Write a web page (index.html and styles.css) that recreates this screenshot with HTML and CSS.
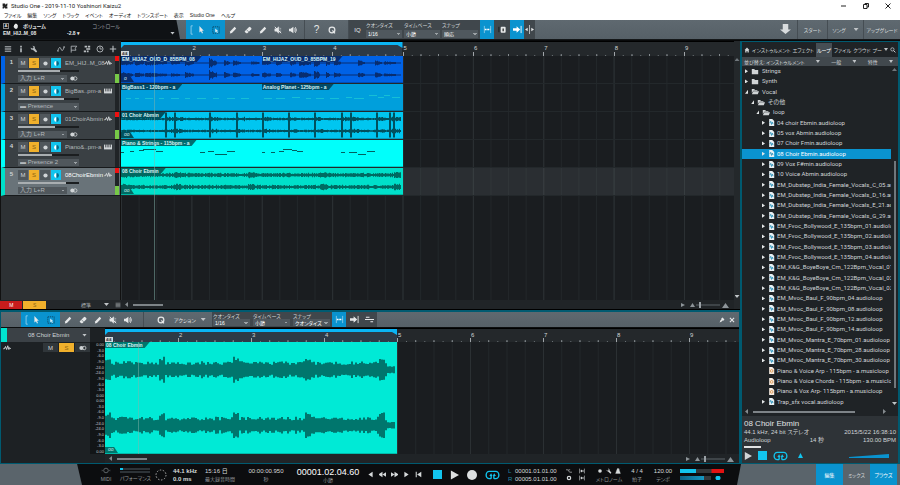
FILE: index.html
```html
<!DOCTYPE html>
<html lang="ja">
<head>
<meta charset="utf-8">
<title>Studio One - 2019-11-10 Yoshinori Kaizu2</title>
<link rel="stylesheet" href="styles.css">
</head>
<body>
<svg class="defs" aria-hidden="true">
  <symbol id="i-menu" viewBox="0 0 10 10"><path d="M1 2h8M1 4h8M1 6h8M1 8h8" stroke="currentColor"/></symbol>
  <symbol id="i-info" viewBox="0 0 10 10"><path d="M4 1h2v2H4zM4 4h2v5H4z" fill="currentColor"/></symbol>
  <symbol id="i-wrench" viewBox="0 0 10 10"><path d="M3 1l1.500 1.500-.5 1.500L2.500 4.500 1 3q-.5 3 2.500 3l4 3.500 1.500-1.500L6 4Q6.500 1 3 1z" fill="currentColor"/></symbol>
  <symbol id="i-curve" viewBox="0 0 12 10"><path d="M1 8q3-9 5-3t5-3.500" fill="none" stroke="currentColor" stroke-width="1.200"/><circle cx="1.500" cy="8" r="1" fill="currentColor"/><circle cx="10.500" cy="2" r="1" fill="currentColor"/></symbol>
  <symbol id="i-flag" viewBox="0 0 10 10"><path d="M1.500 9.500V1.500h7L6.500 4l1 2.500h-6" fill="none" stroke="currentColor"/></symbol>
  <symbol id="i-steps" viewBox="0 0 10 10"><path d="M2 1h3v2H2zM6 1h3v2H6zM4 4h3v2H4zM1 7h3v2H1zM7 4h2v2H7zM5 7h2v2H5z" fill="currentColor"/></symbol>
  <symbol id="i-clock" viewBox="0 0 10 10"><circle cx="5" cy="5" r="3.800" fill="none" stroke="currentColor" stroke-width="1.100"/><path d="M5 2v3h2.500" fill="none" stroke="currentColor"/></symbol>
  <symbol id="i-midi" viewBox="0 0 12 10"><circle cx="6" cy="5" r="3.300" fill="none" stroke="#5d6468" stroke-width="1.400"/><path d="M0 3.500v3l1.500-1.500zM12 3.500v3L10.500 5z" fill="#5d6468"/></symbol>
  <symbol id="i-plus" viewBox="0 0 10 10"><path d="M5 1v8M1 5h8" stroke="currentColor" stroke-width="1.400"/></symbol>
  <symbol id="i-arrow" viewBox="0 0 10 10"><path d="M3 0v8l2-1.500L6.200 9.500l1.300-.6L6.200 6H8.500z" fill="currentColor"/></symbol>
  <symbol id="i-marquee" viewBox="0 0 10 10"><rect x="1" y="1" width="8" height="8" fill="none" stroke="currentColor" stroke-dasharray="1.500 1"/><path d="M4 3v5l1.300-1 1 2 1-.5-1-2H8z" fill="#cfe9f6"/></symbol>
  <symbol id="i-pen" viewBox="0 0 10 10"><path d="M1 9.500l.7-3L7 1l2 2-5.300 5.700z" fill="currentColor"/></symbol>
  <symbol id="i-eraser" viewBox="0 0 10 10"><path d="M1 6.500L6 1.500q1-1 2 0l1 1q.8.8 0 1.800L4.500 8.800q-1 .8-2 0L1 7.500z" fill="currentColor"/><path d="M3 4.500l3 3" stroke="#5a646b" stroke-width=".8"/></symbol>
  <symbol id="i-mute" viewBox="0 0 10 10"><path d="M1 3.500h2L6 1v8L3 6.500H1zM7 3h2M7 5h2M7 7h2" fill="currentColor" stroke="currentColor" stroke-width=".6"/><path d="M1 1l8 8" stroke="currentColor" stroke-width="1.200"/></symbol>
  <symbol id="i-speaker" viewBox="0 0 10 10"><path d="M0 3.300h2L5.500.8v8.400L2 6.700H0z" fill="currentColor"/><path d="M7 3q1.500 2 0 4M8 1.500q2.500 3.500 0 7" fill="none" stroke="currentColor" stroke-width="1.100"/></symbol>
  <symbol id="i-q" viewBox="0 0 10 10"><circle cx="5" cy="5" r="3.600" fill="none" stroke="currentColor" stroke-width="1.500"/><path d="M5.500 5.500l3.200 3.800" stroke="currentColor" stroke-width="1.500"/></symbol>
  <symbol id="i-snap" viewBox="0 0 10 10"><path d="M1.500 1v8M8.500 1v8" stroke="#a9d8f0" stroke-width=".8"/><path d="M2 5h6" stroke="currentColor" stroke-width="1.500" stroke-dasharray="2 .7"/></symbol>
  <symbol id="i-lock" viewBox="0 0 10 10"><path d="M1 2v6" stroke="#15191b"/><rect x="3" y="2" width="5.500" height="6.500" rx="1" fill="currentColor"/><path d="M5 4h1.500v3H5z" fill="#333"/></symbol>
  <symbol id="i-follow" viewBox="0 0 10 10"><path d="M0 3.500h4V1.500L8 5 4 8.500V6.500H0z" fill="currentColor"/><path d="M9 1v8" stroke="currentColor"/></symbol>
  <symbol id="i-center" viewBox="0 0 10 10"><path d="M5 0v10" stroke="currentColor" stroke-width=".8"/><path d="M0 5l3-2v4zM10 5L7 3v4z" fill="currentColor"/></symbol>
  <symbol id="i-zero" viewBox="0 0 10 10"><path d="M0 5h10M1 2.500h4M6 7.500h3" stroke="currentColor" stroke-width="1.300"/></symbol>
  <symbol id="i-down" viewBox="0 0 12 12"><path d="M3 0h6v6h3l-6 5-6-5h3z" fill="currentColor"/></symbol>
  <symbol id="i-wave" viewBox="0 0 10 8"><path d="M0 5h1.500L3 2l1.500 4L6 1l1.500 5L8.500 3.500 10 5" fill="none" stroke="currentColor" stroke-width="1.300"/></symbol>
  <symbol id="i-keys" viewBox="0 0 10 7"><rect width="10" height="6" y=".5" fill="currentColor"/><path d="M2 0v4M4 0v4M6 0v4M8 0v4" stroke="#33383c" stroke-width=".9"/></symbol>
  <symbol id="i-stereo" viewBox="0 0 10 6"><circle cx="3" cy="3" r="2.600" fill="currentColor"/><circle cx="6.500" cy="3" r="2.200" fill="none" stroke="currentColor"/></symbol>
  <symbol id="i-rec" viewBox="0 0 10 10"><circle cx="5" cy="5" r="3" fill="currentColor"/></symbol>
  <symbol id="i-mon" viewBox="0 0 10 10"><path d="M5 1.500a3.500 3.500 0 000 7z" fill="#fff"/><path d="M5 1.500a3.500 3.500 0 010 7z" fill="#066a88"/></symbol>
  <symbol id="i-folder" viewBox="0 0 10 8"><path d="M1 1h3l1 1h4v5.500H1z" fill="currentColor"/></symbol>
  <symbol id="i-open" viewBox="0 0 10 8"><path d="M1 6V1h3l1 1h3v1.200H3zM3 3.800h7L8.500 7.500H1z" fill="currentColor"/></symbol>
  <symbol id="i-audio" viewBox="0 0 8 9"><path d="M1 0h4l2.500 2.500V9H1z" fill="#e8f0f3"/><path d="M2 5l1-2 1 4 1-3 1 2.500" fill="none" stroke="#1c8cb8"/></symbol>
  <symbol id="i-music" viewBox="0 0 8 9"><path d="M1 0h4l2.500 2.500V9H1z" fill="#f5ece2"/><circle cx="4.200" cy="5" r="1.700" fill="none" stroke="#d98a3d"/></symbol>
  <symbol id="i-home" viewBox="0 0 10 10"><path d="M5 1L1 5h1v4h2.200V6.500h1.600V9H8V5h1z" fill="currentColor"/></symbol>
  <symbol id="i-search" viewBox="0 0 10 10"><circle cx="4" cy="4" r="2.700" fill="none" stroke="currentColor" stroke-width="1.200"/><path d="M6 6l3 3" stroke="currentColor" stroke-width="1.600"/></symbol>
  <symbol id="i-loop" viewBox="0 0 16 11"><path d="M6.500 9.500H4.500a3.500 4 0 010-8h7a3.500 4 0 010 8H9.500M6.500 9.500V6.500M9.500 9.500V6.500" fill="none" stroke="currentColor" stroke-width="1.500"/><path d="M4.500 6.500L6.500 3.500 8 6.500zM8.300 6.500L9.800 3.500l2 3z" fill="currentColor"/></symbol>
  <symbol id="i-play" viewBox="0 0 10 10"><path d="M1 0l9 5-9 5z" fill="currentColor"/></symbol>
  <symbol id="i-back" viewBox="0 0 10 10"><path d="M8 1v8L2 5z" fill="currentColor"/></symbol>
  <symbol id="i-rew" viewBox="0 0 10 10"><path d="M5 1v8L-1 5zM11 1v8L5 5z" fill="currentColor"/></symbol>
  <symbol id="i-ff" viewBox="0 0 10 10"><path d="M-1 1v8l6-4zM5 1v8l6-4z" fill="currentColor"/></symbol>
  <symbol id="i-fwd" viewBox="0 0 10 10"><path d="M2 1v8l6-4z" fill="currentColor"/></symbol>
  <symbol id="i-start" viewBox="0 0 10 10"><path d="M9 1v8L3 5zM1 1h1.500v8H1z" fill="currentColor"/></symbol>
  <symbol id="i-metro" viewBox="0 0 10 10"><path d="M4 1h2l3 8H1zM5 5l3-4" fill="currentColor" stroke="currentColor" stroke-width=".6"/></symbol>
  <symbol id="i-gear" viewBox="0 0 10 10"><circle cx="5" cy="5" r="2.800" fill="none" stroke="currentColor" stroke-width="2"/></symbol>
  <symbol id="i-pre" viewBox="0 0 10 10"><path d="M0 3h3l3 4h4M4 3h3" fill="none" stroke="currentColor"/></symbol>
  <symbol id="i-punch" viewBox="0 0 10 10"><path d="M1 1v8M9 1v8" stroke="currentColor"/><path d="M2 5l3-2.500v1.500h3v2H5v1.500z" fill="currentColor"/></symbol>
  <symbol id="i-hand" viewBox="0 0 10 10"><path d="M2 3h1V1.500h1.200V1h1.300v.5h1.300V3H8v4L6.500 9.500H3.500L1 6.500z" fill="currentColor"/></symbol>
  <symbol id="i-logo" viewBox="0 0 10 10"><path d="M1 1h4l1 2 2-2h1v3L7 6h2v3H5L4 7 3 9H1V6l2-1H1z" fill="#222"/></symbol>
  <symbol id="i-x" viewBox="0 0 10 10"><path d="M1.500 1.500l7 7M8.500 1.500l-7 7" stroke="currentColor" stroke-width="1.800"/></symbol>
  <symbol id="i-pin" viewBox="0 0 10 10"><path d="M4 2l2-1 3 3-1 2-2 0-1.500 1.500L1 9l1.500-3.500L4 4z" fill="currentColor"/></symbol>
  <symbol id="i-zoomer" viewBox="0 0 50 8"><path d="M2 2l4 2-4 2zM11 6l2.500-4L16 6zM50 7l-3.500-5L43 7z" fill="#8d9499"/><path d="M17 4h24" stroke="#5c656b"/><path d="M21 1v6" stroke="#9aa1a6" stroke-width="2"/></symbol>
</svg>

<header class="titlebar">
  <div class="titlebar-text">
    <svg class="ic6"><use href="#i-logo"/></svg>
    <span>Studio One - 2019-11-10 Yoshinori Kaizu2</span>
    <span class="window-buttons">
      <button aria-label="最小化"><svg viewBox="0 0 6 6"><path d="M0 3h5" stroke="#222"/></svg></button>
      <button aria-label="元に戻す"><svg viewBox="0 0 6 6"><path d="M.5 1.500h3.500v4H.500zM2 1.500V.5h3.500v3.500H4" fill="none" stroke="#222"/></svg></button>
      <button aria-label="閉じる"><svg viewBox="0 0 6 6"><path d="M.5.5l5 5M5.500.5l-5 5" stroke="#222"/></svg></button>
    </span>
  </div>
  <nav class="menubar">
    <a href="#">ファイル</a><a href="#">編集</a><a href="#">ソング</a><a href="#">トラック</a><a href="#">イベント</a><a href="#">オーディオ</a><a href="#">トランスポート</a><a href="#">表示</a><a href="#">Studio One</a><a href="#">ヘルプ</a>
  </nav>
</header>

<div class="toolbar main-toolbar">
  <div class="param-panel">
    <div class="param-line"><b class="auto-box">A</b><svg class="ic6"><use href="#i-hand"/></svg><b>ボリューム</b><span class="param-control">コントロール</span></div>
    <div class="param-line"><b class="param-track">EM_HIJ..M_08</b><b>-2.8 ▾</b><i class="tri param-open"></i></div>
  </div>
  <div class="tool-active">
    <svg class="bracket" viewBox="0 0 3 12"><path d="M3 1H1v10h2" fill="none" stroke="#9bd4ef"/></svg>
    <button class="tool" aria-label="矢印"><svg><use href="#i-arrow"/></svg></button>
    <button class="tool dark" aria-label="範囲"><svg><use href="#i-marquee"/></svg></button>
  </div>
  <button class="tool" aria-label="ペイント"><svg><use href="#i-pen"/></svg></button>
  <button class="tool" aria-label="消しゴム"><svg><use href="#i-eraser"/></svg></button>
  <button class="tool" aria-label="分割"><svg><use href="#i-pen"/></svg></button>
  <button class="tool" aria-label="ミュート"><svg><use href="#i-mute"/></svg></button>
  <button class="tool" aria-label="試聴"><svg><use href="#i-speaker"/></svg></button>
  <div class="tool-pair">
    <button class="tool glyph">?</button>
    <button class="tool" aria-label="クオンタイズ"><svg><use href="#i-q"/></svg></button>
  </div>
  <div class="snap-group">
    <button class="iq">IQ</button>
    <label class="combo">クオンタイズ<select><option>1/16</option></select></label>
    <label class="combo">タイムベース<select><option>小節</option></select></label>
    <label class="combo">スナップ<select><option>順応</option></select></label>
    <button class="toggle on" aria-label="スナップ"><svg><use href="#i-snap"/></svg></button>
    <button class="toggle" aria-label="ロック"><svg><use href="#i-lock"/></svg></button>
    <button class="toggle on" aria-label="オートスクロール"><svg><use href="#i-follow"/></svg></button>
    <button class="toggle slim" aria-label="中央"><svg><use href="#i-center"/></svg></button>
  </div>
  <div class="page-buttons">
    <button class="dl" aria-label="ダウンロード"><svg><use href="#i-down"/></svg></button>
    <button class="start">スタート</button>
    <button class="song">ソング<i class="tri"></i></button>
    <button class="upgrade">アップグレード</button>
  </div>
</div>

<main class="workspace">
  <div class="center">
    <section class="arranger">
      <div class="track-tools">
        <svg><use href="#i-menu"/></svg><svg><use href="#i-info"/></svg><svg><use href="#i-wrench"/></svg><i class="grow"></i><svg><use href="#i-curve"/></svg><svg><use href="#i-flag"/></svg><svg><use href="#i-steps"/></svg><svg><use href="#i-clock"/></svg><svg><use href="#i-plus"/></svg>
      </div>
      <div class="ruler">
        <i class="loop-range"></i><b class="sig">4/4</b>
        <span></span><span>2</span><span>3</span><span>4</span><span>5</span><span>6</span><span>7</span><span>8</span><span>9</span>
      </div>
      <div class="track-list">
        <div class="track c1">
          <b class="no">1</b>
          <div class="track-main">
            <div class="track-row"><button>M</button><button class="s">S</button><button aria-label="録音"><svg><use href="#i-rec"/></svg></button><button class="mon" aria-label="モニター"><svg><use href="#i-mon"/></svg></button><span class="tname">EM_HIJ..M_08</span><svg class="kind"><use href="#i-wave"/></svg></div>
            <input class="vol" type="range" aria-label="音量" value="69" style="--v:69%">
            <div class="track-row"><select class="in" aria-label="入力"><option>入力 L+R</option></select><svg class="st"><use href="#i-stereo"/></svg></div>
          </div>
          <div class="meter live"></div>
        </div>
        <div class="track c2">
          <b class="no">2</b>
          <div class="track-main">
            <div class="track-row"><button>M</button><button class="s">S</button><button aria-label="録音"><svg><use href="#i-rec"/></svg></button><button class="mon" aria-label="モニター"><svg><use href="#i-mon"/></svg></button><span class="tname">BigBas..pm-a</span><svg class="kind"><use href="#i-keys"/></svg></div>
            <input class="vol" type="range" aria-label="音量" value="75" style="--v:75%">
            <div class="track-row"><select class="in wide" aria-label="音源"><option>▬ Presence</option></select></div>
          </div>
          <div class="meter"></div>
        </div>
        <div class="track c3">
          <b class="no">3</b>
          <div class="track-main">
            <div class="track-row"><button>M</button><button class="s">S</button><button aria-label="録音"><svg><use href="#i-rec"/></svg></button><button class="mon" aria-label="モニター"><svg><use href="#i-mon"/></svg></button><span class="tname">01ChoirAbmin</span><svg class="kind"><use href="#i-wave"/></svg></div>
            <input class="vol" type="range" aria-label="音量" value="61" style="--v:61%">
            <div class="track-row"><select class="in" aria-label="入力"><option>入力 L+R</option></select><svg class="st"><use href="#i-stereo"/></svg></div>
          </div>
          <div class="meter live"></div>
        </div>
        <div class="track c4">
          <b class="no">4</b>
          <div class="track-main">
            <div class="track-row"><button>M</button><button class="s">S</button><button aria-label="録音"><svg><use href="#i-rec"/></svg></button><button class="mon" aria-label="モニター"><svg><use href="#i-mon"/></svg></button><span class="tname">Piano&amp;..pm-a</span><svg class="kind"><use href="#i-keys"/></svg></div>
            <input class="vol" type="range" aria-label="音量" value="55" style="--v:55%">
            <div class="track-row"><select class="in wide" aria-label="音源"><option>▬ Presence 2</option></select></div>
          </div>
          <div class="meter"></div>
        </div>
        <div class="track c5 selected">
          <b class="no">5</b>
          <div class="track-main">
            <div class="track-row"><button>M</button><button class="s">S</button><button aria-label="録音"><svg><use href="#i-rec"/></svg></button><button class="mon" aria-label="モニター"><svg><use href="#i-mon"/></svg></button><span class="tname">08ChoirEbmin</span><svg class="kind"><use href="#i-wave"/></svg></div>
            <input class="vol" type="range" aria-label="音量" value="79" style="--v:79%">
            <div class="track-row"><select class="in" aria-label="入力"><option>入力 L+R</option></select><svg class="st"><use href="#i-stereo"/></svg></div>
          </div>
          <div class="meter live"></div>
        </div>
      </div>
      <div class="lanes">
        <div class="lane"><div class="clip c1"><svg data-wave="oudA"></svg><b>EM_HIJAZ_OUD_D_85BPM_08</b><i class="fade">o</i></div><div class="clip c1"><svg data-wave="oudB"></svg><b>EM_HIJAZ_OUD_D_85BPM_19</b></div></div>
        <div class="lane"><div class="clip c2"><svg data-notes="bass"></svg><b>BigBass1 - 120bpm - a</b></div><div class="clip c2"><svg data-notes="planet"></svg><b>Analog Planet - 125bpm - a</b></div></div>
        <div class="lane"><div class="clip c3 full"><svg data-wave="spikes"></svg><b>01 Choir Abmin</b><i class="fade">oo</i></div></div>
        <div class="lane"><div class="clip c4 full"><svg data-notes="piano"></svg><b>Piano &amp; Strings - 115bpm - a</b></div></div>
        <div class="lane selected"><div class="clip c5 full"><svg data-wave="choir"></svg><b>08 Choir Ebmin</b><i class="fade">oo</i></div></div>
        <i class="playhead"></i>
      </div>
      <div class="list-foot"><button class="foot-m">M</button><button class="foot-s">S</button><span>標準</span><i class="tri"></i><svg class="ic6"><use href="#i-menu"/></svg></div>
      <div class="hscroll"><i class="tri left"></i><i class="thumb"></i><svg class="zoomer"><use href="#i-zoomer"/></svg></div>
      <div class="vscroll"><i class="tri up"></i><i class="tri"></i></div>
    </section>

    <section class="editor">
      <div class="toolbar editor-toolbar">
        <div class="tool-active">
          <svg class="bracket" viewBox="0 0 3 12"><path d="M3 1H1v10h2" fill="none" stroke="#9bd4ef"/></svg>
          <button class="tool" aria-label="矢印"><svg><use href="#i-arrow"/></svg></button>
          <button class="tool dark" aria-label="範囲"><svg><use href="#i-marquee"/></svg></button>
        </div>
        <button class="tool" aria-label="ペイント"><svg><use href="#i-pen"/></svg></button>
        <button class="tool" aria-label="消しゴム"><svg><use href="#i-eraser"/></svg></button>
        <button class="tool" aria-label="分割"><svg><use href="#i-pen"/></svg></button>
        <button class="tool" aria-label="ミュート"><svg><use href="#i-mute"/></svg></button>
        <button class="tool" aria-label="試聴"><svg><use href="#i-speaker"/></svg></button>
        <div class="action-group">
          <button class="tool" aria-label="クオンタイズ"><svg><use href="#i-q"/></svg></button>
          <button class="action">アクション<i class="tri"></i></button>
        </div>
        <div class="snap-group">
          <label class="combo">クオンタイズ<select><option>1/16</option></select></label>
          <label class="combo">タイムベース<select><option>小節</option></select></label>
          <label class="combo">スナップ<select><option>クオンタイズ</option></select></label>
          <button class="toggle on" aria-label="スナップ"><svg><use href="#i-snap"/></svg></button>
          <button class="toggle" aria-label="オートスクロール"><svg><use href="#i-follow"/></svg></button>
          <button class="toggle" aria-label="ゼロクロス"><svg><use href="#i-zero"/></svg></button>
        </div>
        <div class="panel-close"><button aria-label="固定"><svg><use href="#i-pin"/></svg></button><button aria-label="閉じる"><svg><use href="#i-x"/></svg></button></div>
      </div>
      <div class="editor-body">
        <div class="editor-side">
          <button class="editor-name">08 Choir Ebmin<i class="tri"></i></button>
          <div class="editor-buttons"><svg><use href="#i-wave"/></svg><i class="grow"></i><button>M</button><button class="s">S</button><button aria-label="ステレオ"><svg><use href="#i-stereo"/></svg></button></div>
        </div>
        <div class="db-scale">
          <div><span>0.00</span><span>-3.0</span><span>-6.0</span><span>-9.0</span><span>-24.0</span><span>-24.0</span><span>-9.0</span><span>-6.0</span><span>-3.0</span><span>0.00</span></div>
          <div><span>0.00</span><span>-3.0</span><span>-6.0</span><span>-9.0</span><span>-24.0</span><span>-24.0</span><span>-9.0</span><span>-6.0</span><span>-3.0</span><span>0.00</span></div>
        </div>
        <div class="editor-time">
          <div class="ruler">
            <i class="loop-range"></i><b class="sig">4/4</b>
            <span></span><span>2</span><span>3</span><span>4</span><span>5</span><span>6</span><span>7</span><span>8</span><span>9</span>
          </div>
          <div class="editor-lane"><div class="clip big"><svg data-wave="detail"></svg><b>08 Choir Ebmin</b><i class="fade">oo</i></div><i class="playhead"></i></div>
          <div class="hscroll"><i class="tri left"></i><i class="thumb"></i><svg class="zoomer"><use href="#i-zoomer"/></svg></div>
        </div>
      </div>
    </section>
  </div>

  <aside class="browser">
    <nav class="tabs">
      <a href="#" aria-label="ホーム"><svg><use href="#i-home"/></svg></a><a href="#">インストゥルメント</a><a href="#">エフェクト</a><a href="#" class="on">ループ</a><a href="#">ファイル</a><a href="#">クラウド</a><a href="#">プー</a><i class="tri"></i><a href="#" aria-label="検索"><svg><use href="#i-search"/></svg></a>
    </nav>
    <div class="sort"><span>並び替え: インストゥルメント</span><i class="tri"></i><span>一般</span><i class="tri"></i><span>特性</span><i class="tri"></i></div>
    <div class="tree-wrap">
      <ul class="tree">
        <li class="lv0 closed"><svg><use href="#i-folder"/></svg>Strings</li>
        <li class="lv0 closed"><svg><use href="#i-folder"/></svg>Synth</li>
        <li class="lv0 opened"><svg><use href="#i-open"/></svg>Vocal</li>
        <li class="lv1 opened"><svg><use href="#i-open"/></svg>その他</li>
        <li class="lv2 opened"><svg><use href="#i-open"/></svg>loop</li>
        <li class="lv3 closed"><svg><use href="#i-audio"/></svg>04 choir Ebmin.audioloop</li>
        <li class="lv3 closed"><svg><use href="#i-audio"/></svg>05 vox Abmin.audioloop</li>
        <li class="lv3 closed"><svg><use href="#i-audio"/></svg>07 Choir Fmin.audioloop</li>
        <li class="lv3 closed current"><svg><use href="#i-audio"/></svg>08 Choir Ebmin.audioloop</li>
        <li class="lv3 closed"><svg><use href="#i-audio"/></svg>09 Vox F#min.audioloop</li>
        <li class="lv3 closed"><svg><use href="#i-audio"/></svg>10 Voice Abmin.audioloop</li>
        <li class="lv3 closed"><svg><use href="#i-audio"/></svg>EM_Dubstep_India_Female_Vocals_C_05.au</li>
        <li class="lv3 closed"><svg><use href="#i-audio"/></svg>EM_Dubstep_India_Female_Vocals_D_16.au</li>
        <li class="lv3 closed"><svg><use href="#i-audio"/></svg>EM_Dubstep_India_Female_Vocals_E_21.au</li>
        <li class="lv3 closed"><svg><use href="#i-audio"/></svg>EM_Dubstep_India_Female_Vocals_G_29.au</li>
        <li class="lv3 closed"><svg><use href="#i-audio"/></svg>EM_Fvoc_Bollywood_E_135bpm_01.audiolo</li>
        <li class="lv3 closed"><svg><use href="#i-audio"/></svg>EM_Fvoc_Bollywood_E_135bpm_02.audiolo</li>
        <li class="lv3 closed"><svg><use href="#i-audio"/></svg>EM_Fvoc_Bollywood_E_135bpm_03.audiolo</li>
        <li class="lv3 closed"><svg><use href="#i-audio"/></svg>EM_Fvoc_Bollywood_E_135bpm_04.audiolo</li>
        <li class="lv3 closed"><svg><use href="#i-audio"/></svg>EM_K&amp;G_BoyeBoye_Cm_122Bpm_Vocal_01</li>
        <li class="lv3 closed"><svg><use href="#i-audio"/></svg>EM_K&amp;G_BoyeBoye_Cm_122Bpm_Vocal_02</li>
        <li class="lv3 closed"><svg><use href="#i-audio"/></svg>EM_K&amp;G_BoyeBoye_Cm_122Bpm_Vocal_03</li>
        <li class="lv3 closed"><svg><use href="#i-audio"/></svg>EM_Mvoc_Baul_F_90bpm_04.audioloop</li>
        <li class="lv3 closed"><svg><use href="#i-audio"/></svg>EM_Mvoc_Baul_F_90bpm_08.audioloop</li>
        <li class="lv3 closed"><svg><use href="#i-audio"/></svg>EM_Mvoc_Baul_F_90bpm_12.audioloop</li>
        <li class="lv3 closed"><svg><use href="#i-audio"/></svg>EM_Mvoc_Baul_F_90bpm_14.audioloop</li>
        <li class="lv3 closed"><svg><use href="#i-audio"/></svg>EM_Mvoc_Mantra_E_70bpm_01.audioloop</li>
        <li class="lv3 closed"><svg><use href="#i-audio"/></svg>EM_Mvoc_Mantra_E_70bpm_28.audioloop</li>
        <li class="lv3 closed"><svg><use href="#i-audio"/></svg>EM_Mvoc_Mantra_E_70bpm_30.audioloop</li>
        <li class="lv3"><svg><use href="#i-music"/></svg>Piano &amp; Voice Arp - 115bpm - a.musicloop</li>
        <li class="lv3"><svg><use href="#i-music"/></svg>Piano &amp; Voice Chords - 115bpm - a.musiclo</li>
        <li class="lv3"><svg><use href="#i-music"/></svg>Piano &amp; Vox Arp- 115bpm - a.musicloop</li>
        <li class="lv3 closed"><svg><use href="#i-audio"/></svg>Trap_sfx vocal.audioloop</li>
      </ul>
      <div class="tree-scroll"><i class="tri up"></i><i class="tree-thumb"></i><i class="tri"></i></div>
    </div>
    <div class="tree-hscroll"><i class="tri left"></i><i class="thumb"></i><i class="tri right"></i></div>
    <div class="file-info">
      <h2>08 Choir Ebmin</h2>
      <div class="info-line"><span>44.1 kHz, 24 bit ステレオ</span><span>2015/5/22 16:38:10</span></div>
      <div class="info-line"><span>Audioloop</span><span>14 秒</span><span>130.00 BPM</span></div>
      <i class="progress"></i>
      <div class="preview"><button aria-label="再生"><svg><use href="#i-play"/></svg></button><button class="stop" aria-label="停止"></button><button class="cy" aria-label="ループ"><svg class="wide-ic"><use href="#i-loop"/></svg></button><i class="tri up cyan"></i><svg class="ramp" viewBox="0 0 40 4"><path d="M0 4V3L40 0v4z" fill="#0a93cf"/></svg></div>
    </div>
  </aside>
</main>

<footer class="transport">
  <i class="slant-left"></i>
  <div class="cell midi"><svg class="midi-ic"><use href="#i-midi"/></svg><small>MIDI</small></div>
  <div class="cell perf"><i class="bars"></i><small>パフォーマンス</small></div>
  <div class="cell ring"><svg viewBox="0 0 12 12"><circle cx="6" cy="6" r="5" fill="none" stroke="#aaa" stroke-dasharray="1.500 1.600"/></svg></div>
  <div class="cell rate"><b>44.1 kHz</b><b>0.0 ms</b></div>
  <div class="cell rem"><span>15:16 日</span><small>最大録音時間</small></div>
  <div class="cell mid sec"><span>00:00:00.950</span><small>秒</small></div>
  <div class="cell mid pos"><strong>00001.02.04.60</strong><small>小節</small></div>
  <div class="move"><button aria-label="戻る"><svg><use href="#i-back"/></svg></button><button aria-label="巻戻し"><svg><use href="#i-rew"/></svg></button><button aria-label="早送り"><svg><use href="#i-ff"/></svg></button><button aria-label="進む"><svg><use href="#i-fwd"/></svg></button><button aria-label="先頭"><svg><use href="#i-start"/></svg></button></div>
  <div class="play"><button class="stop" aria-label="停止"></button><button aria-label="再生"><svg><use href="#i-play"/></svg></button><button class="record" aria-label="録音"></button><button class="cy" aria-label="ループ"><svg class="wide-ic"><use href="#i-loop"/></svg></button></div>
  <div class="cell loc"><span><em>L</em>00001.01.01.00</span><span><em>R</em>00005.01.01.00</span></div>
  <div class="opts"><svg><use href="#i-pre"/></svg><svg><use href="#i-punch"/></svg><svg><use href="#i-gear"/></svg><svg><use href="#i-punch"/></svg></div>
  <div class="cell mid metro"><span><svg><use href="#i-rec"/></svg><svg><use href="#i-wrench"/></svg><svg><use href="#i-metro"/></svg></span><small>メトロノーム</small></div>
  <div class="cell mid beat"><span>4 / 4</span><small>拍子</small></div>
  <div class="cell mid tempo"><span>120.00</span><small>テンポ</small></div>
  <div class="cell out"><i class="out1"></i><i class="out2"></i></div>
  <div class="views"><button class="on">編集</button><button>ミックス</button><button class="on">ブラウズ</button></div>
</footer>
<script src="clips.js"></script>
</body>
</html>
```
FILE: styles.css
```css
:root {
  --ui: "Liberation Sans", "Noto Sans CJK JP", sans-serif;
  --list: Roboto, "Noto Sans CJK JP", sans-serif;
  --t4: 4px;
  --t5: 5px;
  --t6: 6px;
  --accent: #0a93cf;
  --cyan: #12c4ee;
  --steel: #5a646b;
  --steel-dark: #434b51;
  --dark: #1e2225;
  --teal: #005a70;
}
* { box-sizing: border-box; }
html, body { height: 100%; }
body {
  margin: 0;
  display: flex;
  flex-direction: column;
  overflow: hidden;
  background: #08090a;
  color: #d0d4d6;
  font-family: var(--ui);
  font-size: var(--t5);
  line-height: 6px;
  font-feature-settings: "palt";
  white-space: nowrap;
}
.defs { position: absolute; width: 0; height: 0; }
button, select, input { font: inherit; color: inherit; margin: 0; padding: 0; border: 0; border-radius: 0; background: none; font-feature-settings: inherit; }
select { appearance: none; outline: 0; }
a { color: inherit; text-decoration: none; }
small { font-size: var(--t5); color: #94989b; }
i { font-style: normal; }
svg { display: block; width: 8px; height: 8px; flex: none; overflow: visible; }
svg.ic6 { width: 6px; height: 6px; }
.grow { flex: 1; }
.tri { flex: none; width: 5px; height: 3px; background: #c0c4c7; clip-path: polygon(0 0, 100% 0, 50% 100%); }
.tri.up { clip-path: polygon(50% 0, 100% 100%, 0 100%); background: #70777c; }
.tri.left { width: 3px; height: 5px; clip-path: polygon(100% 0, 100% 100%, 0 50%); background: #858b8f; }
.tri.right { width: 3px; height: 5px; clip-path: polygon(0 0, 100% 50%, 0 100%); background: #858b8f; }

/* title and menus */
.titlebar { height: 20px; flex: none; background: #fff; color: #222; }
.titlebar-text { display: flex; align-items: center; gap: 3px; height: 11px; padding-left: 2px; font-family: var(--list); font-size: var(--t6); }
.window-buttons { margin-left: auto; display: flex; gap: 16px; padding-right: 9px; }
.window-buttons svg { width: 6px; height: 6px; }
.menubar { display: flex; gap: 6px; padding-left: 4px; line-height: 8px; }

/* toolbars */
.toolbar { display: flex; align-items: stretch; flex: none; background: linear-gradient(#5f6970, #566067); color: #e6e8e9; }
.main-toolbar { height: 20px; border-bottom: 1px solid #15181a; }
.param-panel { width: 180px; margin-right: 6px; padding: 3px 5px 3px 3px; background: #0f1215; clip-path: polygon(0 0, 98% 0, 100% 100%, 0 100%); display: flex; flex-direction: column; justify-content: space-between; }
.param-line { display: flex; align-items: center; gap: 4px; }
.auto-box { border: 1px solid #888; width: 6px; height: 6px; font-size: var(--t4); line-height: 4px; text-align: center; }
.param-control { margin-left: auto; margin-right: 55px; color: #9b9fa2; }
.param-track { width: 60px; }
.param-open { margin-left: auto; }
.tool-active { display: flex; align-items: center; width: 39px; padding-left: 4px; background: var(--accent); }
.bracket { width: 3px; height: 10px; }
.tool { width: 15px; display: grid; place-items: center; }
.tool.dark { color: #0c3c55; }
.glyph { font-size: 10px; }
.tool-pair { display: flex; padding: 0 9px 0 4px; margin-left: 4px; border-left: 1px solid #454d53; border-right: 1px solid #454d53; }
.snap-group { display: flex; align-items: stretch; background: #40474c; }
.iq { width: 17px; font-size: var(--t6); }
.combo { display: flex; flex-direction: column; justify-content: center; gap: 2px; width: 38px; color: #d2d6d8; padding-right: 2px; }
.combo select { height: 8px; background: linear-gradient(45deg, transparent 50%, #9ba1a5 50%) no-repeat 31px 3px / 2px 2px, linear-gradient(-45deg, transparent 50%, #9ba1a5 50%) no-repeat 33px 3px / 2px 2px, #50585e; padding-left: 2px; color: #fff; }
.toggle { width: 15px; display: grid; place-items: center; border-right: 1px solid #40474c; }
.toggle.on { background: var(--accent); color: #fff; }
.toggle.slim { width: 10px; }
.toggle svg { width: 9px; height: 9px; }
.page-buttons { display: flex; margin-left: auto; color: #d8dcde; }
.page-buttons button { display: flex; align-items: center; justify-content: center; gap: 8px; border-left: 1px solid #454d53; }
.page-buttons .dl { width: 24px; border: 0; }
.dl svg { width: 11px; height: 11px; }
.page-buttons .start { width: 30px; }
.page-buttons .song { width: 36px; }
.page-buttons .upgrade { width: 37px; }

/* workspace */
.workspace { flex: 1; min-height: 0; display: grid; grid-template-columns: minmax(0, 1fr) 160px; grid-template-rows: minmax(0, 1fr); padding-top: 1px; }
.center { display: flex; flex-direction: column; min-height: 0; min-width: 0; }
.arranger { --bar: calc(563px / 8); flex: 1; min-height: 0; display: grid; grid-template-columns: 121px minmax(0, 1fr) 6px; grid-template-rows: 15px minmax(0, 1fr) 9px; border-bottom: 1px solid #000; background: #1d2124; }
.track-tools { display: flex; align-items: center; gap: 5px; padding: 0 4px; background: #1d2124; color: #b9bec1; }
.track-list { background: #2d3134; border-left: 1px solid #111; border-right: 1px solid #111; min-height: 0; }
.track { display: flex; height: 28px; background: #3a4044; border-bottom: 1px solid #171a1c; border-left: 4px solid var(--c); }
.track.selected { background: #697379; }
.c1 { --c: #0062e6; --ink: #082d70; }
.c2 { --c: #009fdc; --ink: #004b68; }
.c3 { --c: #00c6f0; --ink: #00505e; }
.c4 { --c: #00fffb; --ink: #006f70; }
.c5 { --c: #00e0ca; --ink: #006a62; }
.no { width: 13px; text-align: center; font-size: var(--t6); padding-top: 3px; color: #d0d3d5; }
.track-main { width: 97px; display: flex; flex-direction: column; padding-top: 2px; }
.track-row { display: flex; align-items: center; gap: 1px; }
.track-row button { width: 10px; height: 10px; background: #50575c; font-size: var(--t6); line-height: 10px; text-align: center; }
.track-row button svg { margin: auto; width: 7px; height: 7px; }
.track-row .s, .editor-buttons .s { background: #f0b02c; color: #8a6414; }
.track-row .mon { background: var(--cyan); }
.tname { font-size: var(--t6); margin-left: 3px; width: 38px; color: #b4b9bc; }
.selected .tname { color: #fff; }
.kind { width: 8px; height: 6px; }
.vol { appearance: none; display: block; width: 61px; height: 2px; margin: 2px 0 3px; background: linear-gradient(90deg, #a9aeb1 var(--v), #1b1e20 var(--v)); }
.vol::-webkit-slider-thumb { appearance: none; width: 1px; height: 2px; }
.in { width: 49px; height: 7px; padding-left: 2px; background: linear-gradient(45deg, transparent 50%, #9ba1a5 50%) no-repeat 43px 3px / 2px 2px, linear-gradient(-45deg, transparent 50%, #9ba1a5 50%) no-repeat 45px 3px / 2px 2px, #50575c; font-size: var(--t6); line-height: 7px; color: #b4b9bc; }
.in.wide { width: 61px; background-position: 55px 3px, 57px 3px, 0 0; }
.st { width: 8px; height: 5px; margin-left: 2px; }
.meter { width: 4px; background: #202427; }
.meter.live { background: linear-gradient(#f01010 0 5px, #202427 5px 18px, #77c947 18px); }

.ruler { position: relative; display: grid; grid-template-columns: repeat(9, var(--bar)); overflow: hidden; padding-top: 4px; border-top: 1px solid #000; background: linear-gradient(90deg, #2d3a47 calc(var(--bar) * 4), #24282b 0); font-size: var(--t6); }
.ruler span { padding-left: 1px; line-height: 5px; background:
  linear-gradient(#a0a5a9, #a0a5a9) 0 100% / 1px 4px no-repeat,
  linear-gradient(90deg, #868c90 1px, transparent 1px) 0 100% / 25% 2px repeat-x,
  linear-gradient(90deg, #6e7579 1px, transparent 1px) 0 100% / calc(100% / 8) 1px repeat-x; }
.loop-range { position: absolute; left: 0; top: 0; width: calc(var(--bar) * 4); height: 6px; background: #0bb5f5; clip-path: polygon(0 0, 100% 0, 100% 100%, calc(100% - 5px) 50%, 3px 50%, 0 100%); }
.sig { position: absolute; left: 0; bottom: 0; padding: 0 1px; background: #d5dade; color: #333; font-size: var(--t4); line-height: 5px; }

.lanes, .editor-lane { position: relative; overflow: hidden; background:
  linear-gradient(90deg, #2b3033 1px, transparent 1px) 0 0 / var(--bar) 100%,
  linear-gradient(90deg, #22272a 1px, transparent 1px) 0 0 / calc(var(--bar) / 4) 100%, #1a1d20; }
.lane { height: 28px; display: grid; grid-template-columns: repeat(2, calc(var(--bar) * 2)); border-bottom: 1px solid #23282b; }
.lane.selected { background: rgb(90 98 105 / 25%); }
.clip { position: relative; overflow: hidden; background: var(--c); color: var(--ink); border-bottom: 1px solid rgb(0 0 0 / 20%); }
.clip.full { grid-column: 1 / 3; }
.clip svg { width: 100%; height: 100%; }
.clip b { position: absolute; left: 0; top: 0; padding: 0 7px 0 1px; background: var(--ink); color: #d7f3f5; font-size: var(--t5); line-height: 6px; clip-path: polygon(0 0, 100% 0, calc(100% - 5px) 100%, 0 100%); }
.fade { position: absolute; left: 0; bottom: 0; width: 13px; height: 6px; padding-left: 3px; background: var(--ink); color: #cfeef0; line-height: 5px; clip-path: polygon(0 0, 70% 0, 100% 100%, 0 100%); }
.playhead { position: absolute; top: 0; bottom: 0; left: 33px; width: 1px; background: rgb(130 180 170 / 50%); }

.list-foot { display: flex; align-items: center; gap: 1px; background: #24282b; color: #aab0b3; }
.foot-m, .foot-s { width: 23px; height: 8px; background: #c91c1c; color: #fff; }
.foot-s { background: #f0b02c; color: #8a6414; }
.list-foot span { margin-left: 34px; margin-right: 12px; }
.list-foot .ic6 { margin-left: 5px; }
.hscroll { display: flex; align-items: center; gap: 5px; padding: 0 2px 0 4px; background: #202427; }
.thumb { width: 30px; height: 2px; background: #7e8488; }
.zoomer { width: 56px; height: 8px; margin-left: auto; }
.vscroll { grid-column: 3; grid-row: 1 / 4; display: flex; flex-direction: column; justify-content: space-between; align-items: center; padding: 17px 0 11px; background: #24282b; }
.list-foot { grid-column: 1; }

/* audio editor */
.editor { --bar: 73px; height: 154px; flex: none; display: flex; flex-direction: column; border: 1px solid var(--teal); border-top-width: 2px; background: #1d2124; }
.editor-toolbar { flex: none; height: 16px; padding-left: 20px; border-bottom: 1px solid #0c0e0f; }
.editor-toolbar .combo { width: 40px; gap: 0; padding-left: 1px; }
.editor-toolbar .combo select { height: 7px; }
.action-group { display: flex; margin-left: 8px; padding-left: 9px; width: 69px; border-left: 1px solid #454d53; }
.action { display: flex; align-items: center; gap: 5px; margin-left: 6px; }
.panel-close { display: flex; gap: 4px; align-items: center; margin-left: auto; padding-right: 4px; }
.panel-close svg { width: 6px; height: 6px; }
.editor-body { flex: 1; min-height: 0; display: grid; grid-template-columns: 89px 15px minmax(0, 1fr); grid-template-rows: minmax(0, 1fr); }
.editor-name { display: flex; align-items: center; justify-content: space-between; width: 100%; height: 14px; padding: 0 3px 0 21px; border-left: 6px solid #00e5d0; background: #3b4146; font-size: var(--t6); }
.editor-buttons { display: flex; gap: 1px; align-items: center; padding: 1px 0 0 2px; }
.editor-buttons button { width: 15px; height: 9px; display: grid; place-items: center; background: #30363a; font-size: var(--t6); }
.editor-buttons svg { width: 8px; height: 6px; }
.db-scale { display: flex; flex-direction: column; min-height: 0; margin-top: 14px; margin-bottom: 9px; font-size: var(--t4); background: #121517; color: #cbd0d2; text-align: right; }
.db-scale div { flex: 1; display: flex; flex-direction: column; justify-content: space-between; }
.db-scale span { line-height: 5px; padding-right: 1px; }
.editor-time { display: grid; grid-template-rows: 14px minmax(0, 1fr) 9px; min-height: 0; }
.editor-lane { display: flex; min-height: 0; }
.clip.big { --c: #00ead6; --ink: #00766d; width: calc(var(--bar) * 4); }

/* browser */
.browser { display: flex; flex-direction: column; min-height: 0; min-width: 0; border: 2px solid var(--teal); border-top-width: 1px; border-bottom-width: 1px; background: #1f2326; }
.tabs { display: flex; align-items: center; justify-content: space-between; height: 15px; padding: 0 2px; flex: none; }
.tabs a { line-height: 14px; }
.tabs svg { width: 6px; height: 6px; }
.tabs .on { padding: 0 1px; background: #464e54; color: #fff; }
.tabs .tri { width: 4px; }
.sort { display: flex; align-items: center; justify-content: space-between; height: 9px; flex: none; padding: 0 5px 0 2px; background: #41484d; }
.sort .tri { width: 4px; }
.tree-wrap { flex: 1; min-height: 0; display: flex; }
.tree { flex: 1; min-width: 0; display: grid; grid-auto-rows: minmax(0, 1fr); margin: 0; padding: 0; list-style: none; font-family: var(--list); font-size: var(--t6); }
.tree li { display: flex; align-items: center; gap: 3px; overflow: hidden; min-width: 0; }
.tree li::before { content: ""; flex: none; width: 3px; height: 4px; }
.tree .closed::before { background: #e2e5e6; clip-path: polygon(0 0, 100% 50%, 0 100%); }
.tree .opened::before { background: #e2e5e6; clip-path: polygon(100% 0, 100% 100%, 0 100%); }
.tree svg { width: 7px; height: 7px; }
.tree .lv0 { padding-left: 3px; }
.tree .lv0 svg, .tree .lv1 svg, .tree .lv2 svg { width: 8px; }
.tree .lv1 { padding-left: 9px; }
.tree .lv2 { padding-left: 14px; }
.tree .lv3 { padding-left: 20px; }
.tree .lv3 svg { margin-right: -1px; }
.tree .current { background: var(--accent); color: #fff; }
.tree-scroll { width: 7px; display: flex; flex-direction: column; align-items: center; padding: 2px 0; }
.tree-thumb { width: 2px; margin: 90px 0 14px; flex: 1; background: #70777c; }
.tree-hscroll { display: flex; align-items: center; gap: 5px; height: 9px; flex: none; padding: 0 12px 0 3px; }
.tree-hscroll .thumb { width: 102px; }
.tree-hscroll .right { margin-left: auto; }
.file-info { flex: none; height: 47px; display: flex; flex-direction: column; padding: 3px 2px 2px; background: #2e3337; }
.file-info h2 { margin: 0; font-size: 8px; font-weight: 400; line-height: 9px; color: #e0e3e4; }
.info-line { display: flex; justify-content: space-between; line-height: 8px; font-size: var(--t6); }
.progress { display: block; width: 17px; height: 2px; margin: 2px 0; background: #dfe2e3; }
.preview { flex: 1; display: flex; align-items: center; gap: 6px; }
.preview .ramp { width: 42px; height: 4px; margin-left: auto; margin-right: 6px; }
.stop { width: 9px; height: 9px; background: var(--cyan); }
.cy { color: var(--cyan); }
.wide-ic { width: 15px; height: 10px; }
.tri.cyan { background: var(--cyan); height: 5px; margin-left: 4px; }

/* transport */
.transport { flex: none; height: 21px; display: flex; align-items: center; background: #0c0d0f; color: #d6dadb; }
.slant-left { width: 82px; align-self: stretch; background: var(--steel); clip-path: polygon(0 0, 94% 0, 100% 100%, 0 100%); }
.cell { display: flex; flex-direction: column; justify-content: center; gap: 2px; flex: none; font-size: var(--t6); }
.cell.mid { align-items: center; text-align: center; }
.midi { width: 38px; align-items: center; padding-left: 10px; }
.midi-ic { width: 12px; height: 7px; }
.perf { width: 35px; }
.bars { width: 30px; height: 5px; background: linear-gradient(90deg, var(--cyan) 3px, #2d3338 3px) 0 0 / 100% 2px no-repeat, linear-gradient(#2d3338, #2d3338) 0 100% / 100% 2px no-repeat; }
.ring { width: 18px; }
.ring svg { width: 12px; height: 12px; }
.rate { width: 32px; }
.rem { width: 38px; }
.sec { width: 46px; }
.pos { width: 78px; gap: 0; }
.pos strong { font-size: 9px; line-height: 10px; font-weight: 400; color: #fff; }
.move { display: flex; gap: 5px; width: 66px; }
.move svg { width: 7px; height: 7px; }
.play { display: flex; align-items: center; gap: 8px; width: 75px; color: #dcdfe0; }
.play svg:not(.wide-ic) { width: 9px; height: 10px; }
.record { width: 10px; height: 10px; border-radius: 50%; background: #dcdfe0; }
.loc { width: 58px; }
.loc em { font-style: normal; color: #2386a5; display: inline-block; width: 7px; }
.opts { display: grid; grid-template-columns: 12px 12px; gap: 1px 1px; width: 26px; }
.opts svg, .metro svg { width: 6px; height: 6px; }
.metro { width: 34px; }
.metro span { display: flex; gap: 3px; }
.beat { width: 22px; }
.tempo { width: 30px; }
.out { width: 46px; gap: 3px; padding-left: 2px; }
.out i { height: 4px; }
.out1 { background: linear-gradient(90deg, var(--cyan) 16px, #34383b 16px 31px, #e31212 32px); }
.out2 { background: radial-gradient(circle at 38px 2px, var(--cyan) 2px, transparent 3px), linear-gradient(90deg, #0c6285, #1597c2 24px, #34383b 24px 31px, transparent 31px); }
.views { flex: 1; align-self: stretch; display: flex; justify-content: flex-end; padding-right: 3px; margin-left: 13px; background: var(--steel); clip-path: polygon(4px 0, 100% 0, 100% 100%, 0 100%); color: #d4d8da; }
.views button { width: 27px; }
.views .on { background: var(--accent); color: #fff; }
```
FILE: clips.js
```js
// Draws the waveforms and note previews inside the clips.
const NS = "http://www.w3.org/2000/svg";

function noise(seed) {
  let s = seed;
  return () => (s = (s * 16807) % 2147483647) / 2147483647;
}

const bursts = {
  oudA: [[0, 12, 3], [14, 9, 3], [24, 22, 3], [50, 9, 2], [64, 9, 3], [88, 8, 5], [103, 6, 3], [112, 8, 3], [130, 8, 2]],
  oudB: [[0, 9, 3], [14, 6, 3], [28, 6, 3], [37, 12, 4], [52, 6, 5], [64, 4, 3], [72, 7, 3], [96, 7, 3], [113, 7, 3], [122, 12, 2]]
};
const spikes = [44, 53, 88, 115, 141, 167, 193, 220, 229, 255, 268, 272];
const swells = [2, 56, 130, 202, 276];

// Half height of the wave, in px, at each x of a clip.
function amplitude(kind, x, rnd) {
  const r = rnd();
  if (bursts[kind]) {
    const hit = bursts[kind].find(([from, len]) => x >= from && x < from + len);
    return hit ? Math.max(1, hit[2] * (1 - (x - hit[0]) / hit[1] * 0.6) * (0.6 + r * 0.4)) : 0.5;
  }
  if (kind === "spikes") {
    if (spikes.some(s => s === x || s + 1 === x)) return 6.5;
    const near = spikes.some(s => x > s && x - s < 9);
    return near ? 1 + r * 1.3 : 0.8 + r * 0.5;
  }
  if (kind === "choir") {
    const near = swells.some(s => Math.abs(s - x) < 4);
    return (near ? 2 : 1) + r * 1.2;
  }
  const near = swells.some(s => Math.abs(s - x) < 3);
  const tail = x > 280 ? 0.45 : 1;
  return ((near ? 9.5 : 5) + r * 3.5) * tail;
}

function drawWave(svg) {
  const kind = svg.dataset.wave;
  const { width, height } = svg.getBoundingClientRect();
  const step = kind === "detail" ? 2 : 1;
  [0.27, 0.73].forEach((at, channel) => {
    const mid = height * (kind === "detail" ? 0.25 + channel * 0.5 : at);
    const rnd = noise(77 + channel);
    let top = "", bottom = "";
    for (let x = 0; x < width - 2; x += step) {
      const a = amplitude(kind, x, rnd);
      top += `L${x} ${mid - a}H${x + step}`;
      bottom = `L${x + step} ${mid + a}H${x}` + bottom;
    }
    const path = document.createElementNS(NS, "path");
    path.setAttribute("d", `M0 ${mid}${top}${bottom}Z`);
    path.setAttribute("fill", "currentColor");
    svg.append(path);
  });
}

const notes = {
  piano: [[0, 3, 13], [9, 4, 12], [18, 5, 11], [22, 13, 10], [35, 7, 12], [79, 5, 13], [87, 6, 12], [94, 12, 15], [106, 8, 12],
    [141, 3, 13], [150, 4, 13], [158, 5, 12], [162, 9, 10], [171, 5, 11], [176, 6, 12], [220, 4, 13], [228, 8, 13], [237, 8, 15], [246, 8, 12]],
  bass: [[5, 5, 15], [14, 4, 15], [24, 8, 15], [38, 5, 15], [50, 8, 15], [64, 5, 15], [76, 9, 15], [92, 6, 15], [106, 8, 15], [120, 8, 15]],
  planet: [[2, 8, 15], [14, 9, 15], [30, 8, 14], [44, 5, 15], [54, 8, 15], [68, 9, 15], [84, 6, 14], [92, 10, 15], [107, 8, 12], [116, 6, 14], [122, 6, 12], [130, 8, 14]]
};

function drawNotes(svg) {
  const kind = svg.dataset.notes;
  for (const [x, len, y] of notes[kind]) {
    const line = document.createElementNS(NS, "path");
    line.setAttribute("d", `M${x} ${y - 0.5}h${len}`);
    line.setAttribute("stroke", kind === "piano" ? "#00605f" : "#16bfd6");
    svg.append(line);
  }
}

document.querySelectorAll("[data-wave]").forEach(drawWave);
document.querySelectorAll("[data-notes]").forEach(drawNotes);
```
